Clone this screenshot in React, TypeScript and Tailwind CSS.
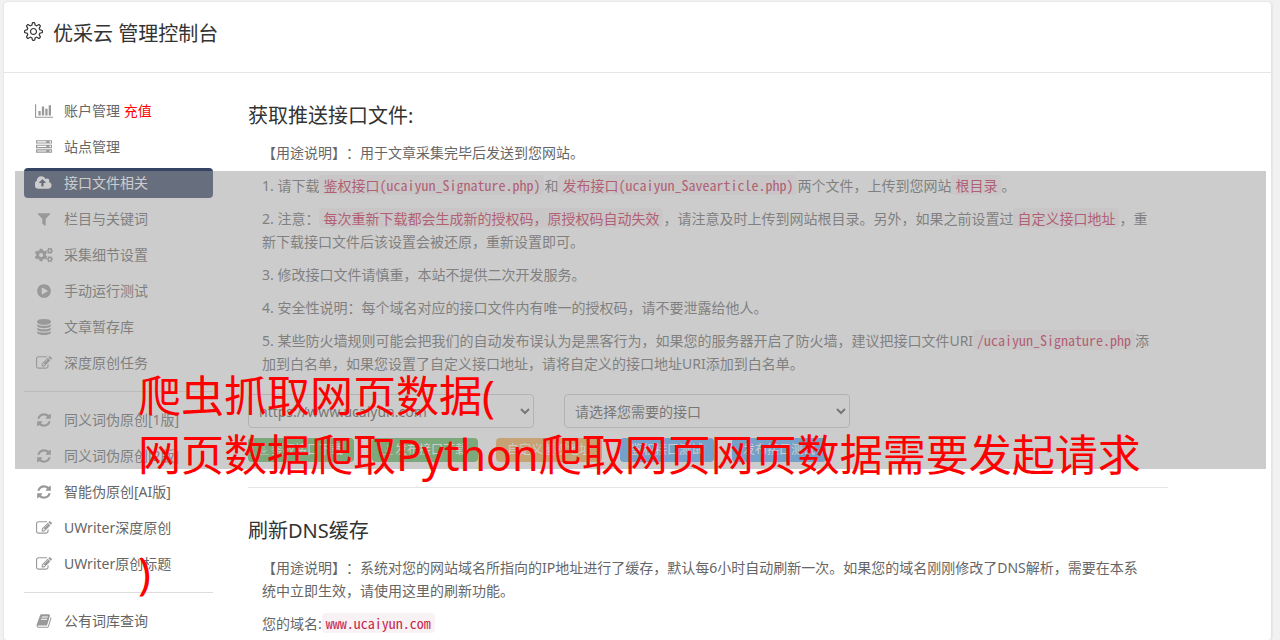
import type { ReactNode } from "react";
import { FaCogs } from "react-icons/fa";
import { SlSettings } from "react-icons/sl";
import { TfiDownload } from "react-icons/tfi";

interface GlyphProps {
  d: string;
  width?: number;
}

// Font glyphs share a 1792 unit em, wide ones get a wider box
function Glyph({ d, width = 1792 }: GlyphProps) {
  return (
    <svg viewBox={`0 0 ${width} 1792`} className="h-4 w-auto shrink-0" fill="currentColor" aria-hidden="true">
      <path d={d} />
    </svg>
  );
}

const PATHS = {
  chart:
    "M640 896v512h-256v-512h256zm384-512v1024h-256v-1024h256zm1024 1152v128h-2048v-1536h128v1408h1920zm-640-896v768h-256v-768h256zm384-384v1152h-256v-1152h256z",
  server:
    "M128 1408h1024v-128h-1024v128zm0-512h1024v-128h-1024v128zm1568 448q0-40-28-68t-68-28-68 28-28 68 28 68 68 28 68-28 28-68zm-1568-960h1024v-128h-1024v128zm1568 448q0-40-28-68t-68-28-68 28-28 68 28 68 68 28 68-28 28-68zm0-512q0-40-28-68t-68-28-68 28-28 68 28 68 68 28 68-28 28-68zm96 832v384h-1792v-384h1792zm0-512v384h-1792v-384h1792zm0-512v384h-1792v-384h1792z",
  cloud:
    "M1216 864q0-14-9-23l-352-352q-9-9-23-9t-23 9l-351 351q-10 12-10 24 0 14 9 23t23 9h224v352q0 13 9.5 22.5t22.5 9.5h192q13 0 22.5-9.5t9.5-22.5v-352h224q13 0 22.5-9.5t9.5-22.5zm640 288q0 159-112.5 271.5t-271.5 112.5h-1088q-185 0-316.5-131.5t-131.5-316.5q0-130 70-240t188-165q-2-30-2-43 0-212 150-362t362-150q156 0 285.5 87t188.5 231q71-62 166-62 106 0 181 75t75 181q0 76-41 138 130 31 213.5 135.5t83.5 238.5z",
  filter:
    "M1595 295q17 41-14 70l-493 493v742q0 42-39 59-13 5-25 5-27 0-45-19l-256-256q-19-19-19-45v-486l-493-493q-31-29-14-70 17-39 59-39h1280q42 0 59 39z",
  play:
    "M896 128q209 0 385.5 103t279.5 279.5 103 385.5-103 385.5-279.5 279.5-385.5 103-385.5-103-279.5-279.5-103-385.5 103-385.5 279.5-279.5 385.5-103zm384 823q32-18 32-55t-32-55l-544-320q-31-19-64-1-32 19-32 56v640q0 37 32 56 16 8 32 8 17 0 32-9z",
  database:
    "M896 768q237 0 443-43t325-127v170q0 69-103 128t-280 93.5-385 34.5-385-34.5-280-93.5-103-128v-170q119 84 325 127t443 43zm0 768q237 0 443-43t325-127v170q0 69-103 128t-280 93.5-385 34.5-385-34.5-280-93.5-103-128v-170q119 84 325 127t443 43zm0-384q237 0 443-43t325-127v170q0 69-103 128t-280 93.5-385 34.5-385-34.5-280-93.5-103-128v-170q119 84 325 127t443 43zm0-1152q208 0 385 34.5t280 93.5 103 128v128q0 69-103 128t-280 93.5-385 34.5-385-34.5-280-93.5-103-128v-128q0-69 103-128t280-93.5 385-34.5z",
  edit:
    "M888 1184l116-116-152-152-116 116v56h96v96h56zm440-720q-16-16-33 1l-350 350q-17 17-1 33t33-1l350-350q17-17 1-33zm80 594v190q0 119-84.5 203.5t-203.5 84.5h-832q-119 0-203.5-84.5t-84.5-203.5v-832q0-119 84.5-203.5t203.5-84.5h832q63 0 117 25 15 7 18 23 3 17-9 29l-49 49q-14 14-32 8-23-6-45-6h-832q-66 0-113 47t-47 113v832q0 66 47 113t113 47h832q66 0 113-47t47-113v-126q0-13 9-22l64-64q15-15 35-7t20 29zm-96-738l288 288-672 672h-288v-288zm444 132l-92 92-288-288 92-92q28-28 68-28t68 28l152 152q28 28 28 68t-28 68z",
  refresh:
    "M1639 1056q0 5-1 7-64 268-268 434.5t-478 166.5q-146 0-282.5-55t-243.5-157l-129 129q-19 19-45 19t-45-19-19-45v-448q0-26 19-45t45-19h448q26 0 45 19t19 45-19 45l-137 137q71 66 161 102t187 36q134 0 250-65t186-179q11-17 53-117 8-23 30-23h192q13 0 22.5 9.5t9.5 22.5zm25-800v448q0 26-19 45t-45 19h-448q-26 0-45-19t-19-45 19-45l138-138q-148-137-349-137-134 0-250 65t-186 179q-11 17-53 117-8 23-30 23h-199q-13 0-22.5-9.5t-9.5-22.5v-7q65-268 270-434.5t480-166.5q146 0 284 55.5t245 156.5l130-129q19-19 45-19t45 19 19 45z",
  book:
    "M1703 478q40 57 18 129l-275 906q-19 64-76.5 107.5t-122.5 43.5h-923q-77 0-148.5-53.5t-99.5-131.5q-24-67-2-127 0-4 3-27t4-37q1-8-3-21.5t-3-19.5q2-11 8-21t16.5-23.5 16.5-23.5q23-38 45-91.5t30-91.5q3-10 .5-30t-.5-28q3-11 17-28t17-23q21-36 42-92t25-90q1-9-2.5-32t.5-28q4-13 22-30.5t22-22.5q19-26 42.5-84.5t27.5-96.5q1-8-3-25.5t-2-26.5q2-8 9-18t18-23 17-21q8-12 16.5-30.5t15-35 16-36 19.5-32 26.5-23.5 36-11.5 47.5 5.5l-1 3q38-9 51-9h761q74 0 114 56t18 130l-274 906q-36 119-71.5 153.5t-128.5 34.5h-869q-27 0-38 15-11 16-1 43 24 70 144 70h923q29 0 56-15.5t35-41.5l300-987q7-22 5-57 38 15 59 43zm-1064 2q-4 13 2 22.5t20 9.5h608q13 0 25.5-9.5t16.5-22.5l21-64q4-13-2-22.5t-20-9.5h-608q-13 0-25.5 9.5t-16.5 22.5zm-83 256q-4 13 2 22.5t20 9.5h608q13 0 25.5-9.5t16.5-22.5l21-64q4-13-2-22.5t-20-9.5h-608q-13 0-25.5 9.5t-16.5 22.5z",
};

interface NavItem {
  label: string;
  icon: ReactNode;
  extra?: string;
  active?: boolean;
}

const NAV_GROUPS: NavItem[][] = [
  [
    { label: "账户管理", icon: <Glyph d={PATHS.chart} width={2048} />, extra: "充值" },
    { label: "站点管理", icon: <Glyph d={PATHS.server} /> },
    { label: "接口文件相关", icon: <Glyph d={PATHS.cloud} width={1920} />, active: true },
    { label: "栏目与关键词", icon: <Glyph d={PATHS.filter} /> },
    { label: "采集细节设置", icon: <FaCogs className="h-4 w-[18px]" /> },
    { label: "手动运行测试", icon: <Glyph d={PATHS.play} /> },
    { label: "文章暂存库", icon: <Glyph d={PATHS.database} /> },
    { label: "深度原创任务", icon: <Glyph d={PATHS.edit} /> },
  ],
  [
    { label: "同义词伪原创[1版]", icon: <Glyph d={PATHS.refresh} /> },
    { label: "同义词伪原创[2版]", icon: <Glyph d={PATHS.refresh} /> },
    { label: "智能伪原创[AI版]", icon: <Glyph d={PATHS.refresh} /> },
    { label: "UWriter深度原创", icon: <Glyph d={PATHS.edit} /> },
    { label: "UWriter原创标题", icon: <Glyph d={PATHS.edit} /> },
  ],
  [{ label: "公有词库查询", icon: <Glyph d={PATHS.book} /> }],
];

const ACTIONS = [
  { label: "鉴权接口下载", color: "bg-[#5cb85c]", download: true },
  { label: "发布接口下载", color: "bg-[#5cb85c]", download: true },
  { label: "自定义鉴权地址", color: "bg-[#f0ad4e]", download: false },
  { label: "鉴权接口测试", color: "bg-[#4fa8f8]", download: false },
  { label: "发布接口测试", color: "bg-[#4fa8f8]", download: false },
];

function Code({ children }: { children: ReactNode }) {
  return (
    <code className="rounded bg-[#f9f2f4] px-1 font-['Noto_Sans_Mono_CJK_SC','Liberation_Mono',monospace] text-sm leading-5 text-[#c7254e]">
      {children}
    </code>
  );
}

function Sidebar() {
  return (
    <nav className="w-[189px] shrink-0">
      {NAV_GROUPS.map((group, i) => (
        <div key={i}>
          {i > 0 && <hr className="my-[13px] border-[#ddd]" />}
          <ul className="flex flex-col gap-1.5">
            {group.map((item) => (
              <li key={item.label}>
                <a
                  href="#"
                  className={`flex h-[30px] items-center gap-2.5 rounded px-2.5 ${
                    item.active ? "bg-[#354463] text-white" : "text-[#666]"
                  }`}
                >
                  <span className={`flex w-5 justify-center ${item.active ? "text-white" : "text-[#999]"}`}>
                    {item.icon}
                  </span>
                  <span>
                    {item.label}
                    {item.extra && <span className="text-[#f00]"> {item.extra}</span>}
                  </span>
                </a>
              </li>
            ))}
          </ul>
        </div>
      ))}
    </nav>
  );
}

function SelectBox({ label, options }: { label: string; options: string[] }) {
  return (
    <select
      aria-label={label}
      className="h-[34px] w-[286px] rounded border border-[#ccc] bg-white px-1.5 text-sm text-[#555]"
    >
      {options.map((option) => (
        <option key={option}>{option}</option>
      ))}
    </select>
  );
}

export default function App() {
  return (
    <div className="relative h-screen overflow-hidden bg-[#f1f1f1] pt-0.5 pr-2 pl-1 font-['Noto_Sans','Noto_Sans_CJK_SC',sans-serif] text-sm text-[#666] [text-spacing-trim:space-all]">
      <div className="min-h-full rounded border-r border-[#e4e4e4] bg-white shadow-[0_0_1px_1px_#e6e6e6]">
        <header className="flex h-[71px] items-start gap-2.5 border-b border-[#e5e5e5] px-5 pt-4 text-[#333]">
          <SlSettings className="mt-1 h-[19px] w-[19px]" />
          <h1 className="text-xl leading-8">优采云 管理控制台</h1>
        </header>

        <div className="flex gap-[35px] px-5 pt-[23px]">
          <Sidebar />

          <main className="mr-[83px] min-w-0 flex-1 pt-1.5">
            <h2 className="mb-[11px] text-xl leading-7 text-[#333]">获取推送接口文件:</h2>
            <div className="mr-[17px] ml-3.5 flex flex-col gap-2.5 leading-[23px]">
              <p>【用途说明】：用于文章采集完毕后发送到您网站。</p>
              <p>
                1. 请下载<Code>鉴权接口(ucaiyun_Signature.php)</Code>和<Code>发布接口(ucaiyun_Savearticle.php)</Code>
                两个文件，上传到您网站<Code>根目录</Code>。
              </p>
              <p>
                2. 注意：<Code>每次重新下载都会生成新的授权码，原授权码自动失效</Code>
                ，请注意及时上传到网站根目录。另外，如果之前设置过<Code>自定义接口地址</Code>
                ，重新下载接口文件后该设置会被还原，重新设置即可。
              </p>
              <p>3. 修改接口文件请慎重，本站不提供二次开发服务。</p>
              <p>4. 安全性说明：每个域名对应的接口文件内有唯一的授权码，请不要泄露给他人。</p>
              <p>
                5. 某些防火墙规则可能会把我们的自动发布误认为是黑客行为，如果您的服务器开启了防火墙，建议把接口文件URI
                <Code>/ucaiyun_Signature.php</Code>
                添加到白名单，如果您设置了自定义接口地址，请将自定义的接口地址URI添加到白名单。
              </p>
            </div>

            <div className="mt-[19px] flex gap-[30px]">
              <SelectBox label="站点" options={["https://www.ucaiyun.com"]} />
              <SelectBox label="接口" options={["请选择您需要的接口"]} />
            </div>
            <div className="mt-2.5 flex gap-[18px]">
              {ACTIONS.map((action) => (
                <button
                  key={action.label}
                  type="button"
                  className={`flex h-6 items-center gap-0.5 rounded px-[11px] text-xs text-white ${action.color}`}
                >
                  {action.download && <TfiDownload className="h-2.5 w-2.5" />}
                  {action.label}
                </button>
              ))}
            </div>

            <hr className="mt-[25px] mb-[29px] border-[#e5e5e5]" />

            <h2 className="mb-[11px] text-xl leading-7 text-[#333]">刷新DNS缓存</h2>
            <div className="mr-[17px] ml-3.5 flex flex-col gap-2.5 leading-[23px]">
              <p>
                【用途说明】：系统对您的网站域名所指向的IP地址进行了缓存，默认每6小时自动刷新一次。如果您的域名刚刚修改了DNS解析，需要在本系统中立即生效，请使用这里的刷新功能。
              </p>
              <p>
                您的域名:<Code>www.ucaiyun.com</Code>
              </p>
            </div>
          </main>
        </div>
      </div>

      {/* Grey band and caption lie over the whole console */}
      <div className="pointer-events-none absolute top-[171px] right-[14px] left-[15px] h-[298px] bg-[#999]/50" />
      <div className="pointer-events-none absolute top-[366px] left-[138px] text-[43px] leading-[59px] whitespace-nowrap text-[#f00]">
        <p>爬虫抓取网页数据(</p>
        <p>网页数据爬取Python爬取网页网页数据需要发起请求</p>
        <p className="mt-[59px]">)</p>
      </div>
    </div>
  );
}
